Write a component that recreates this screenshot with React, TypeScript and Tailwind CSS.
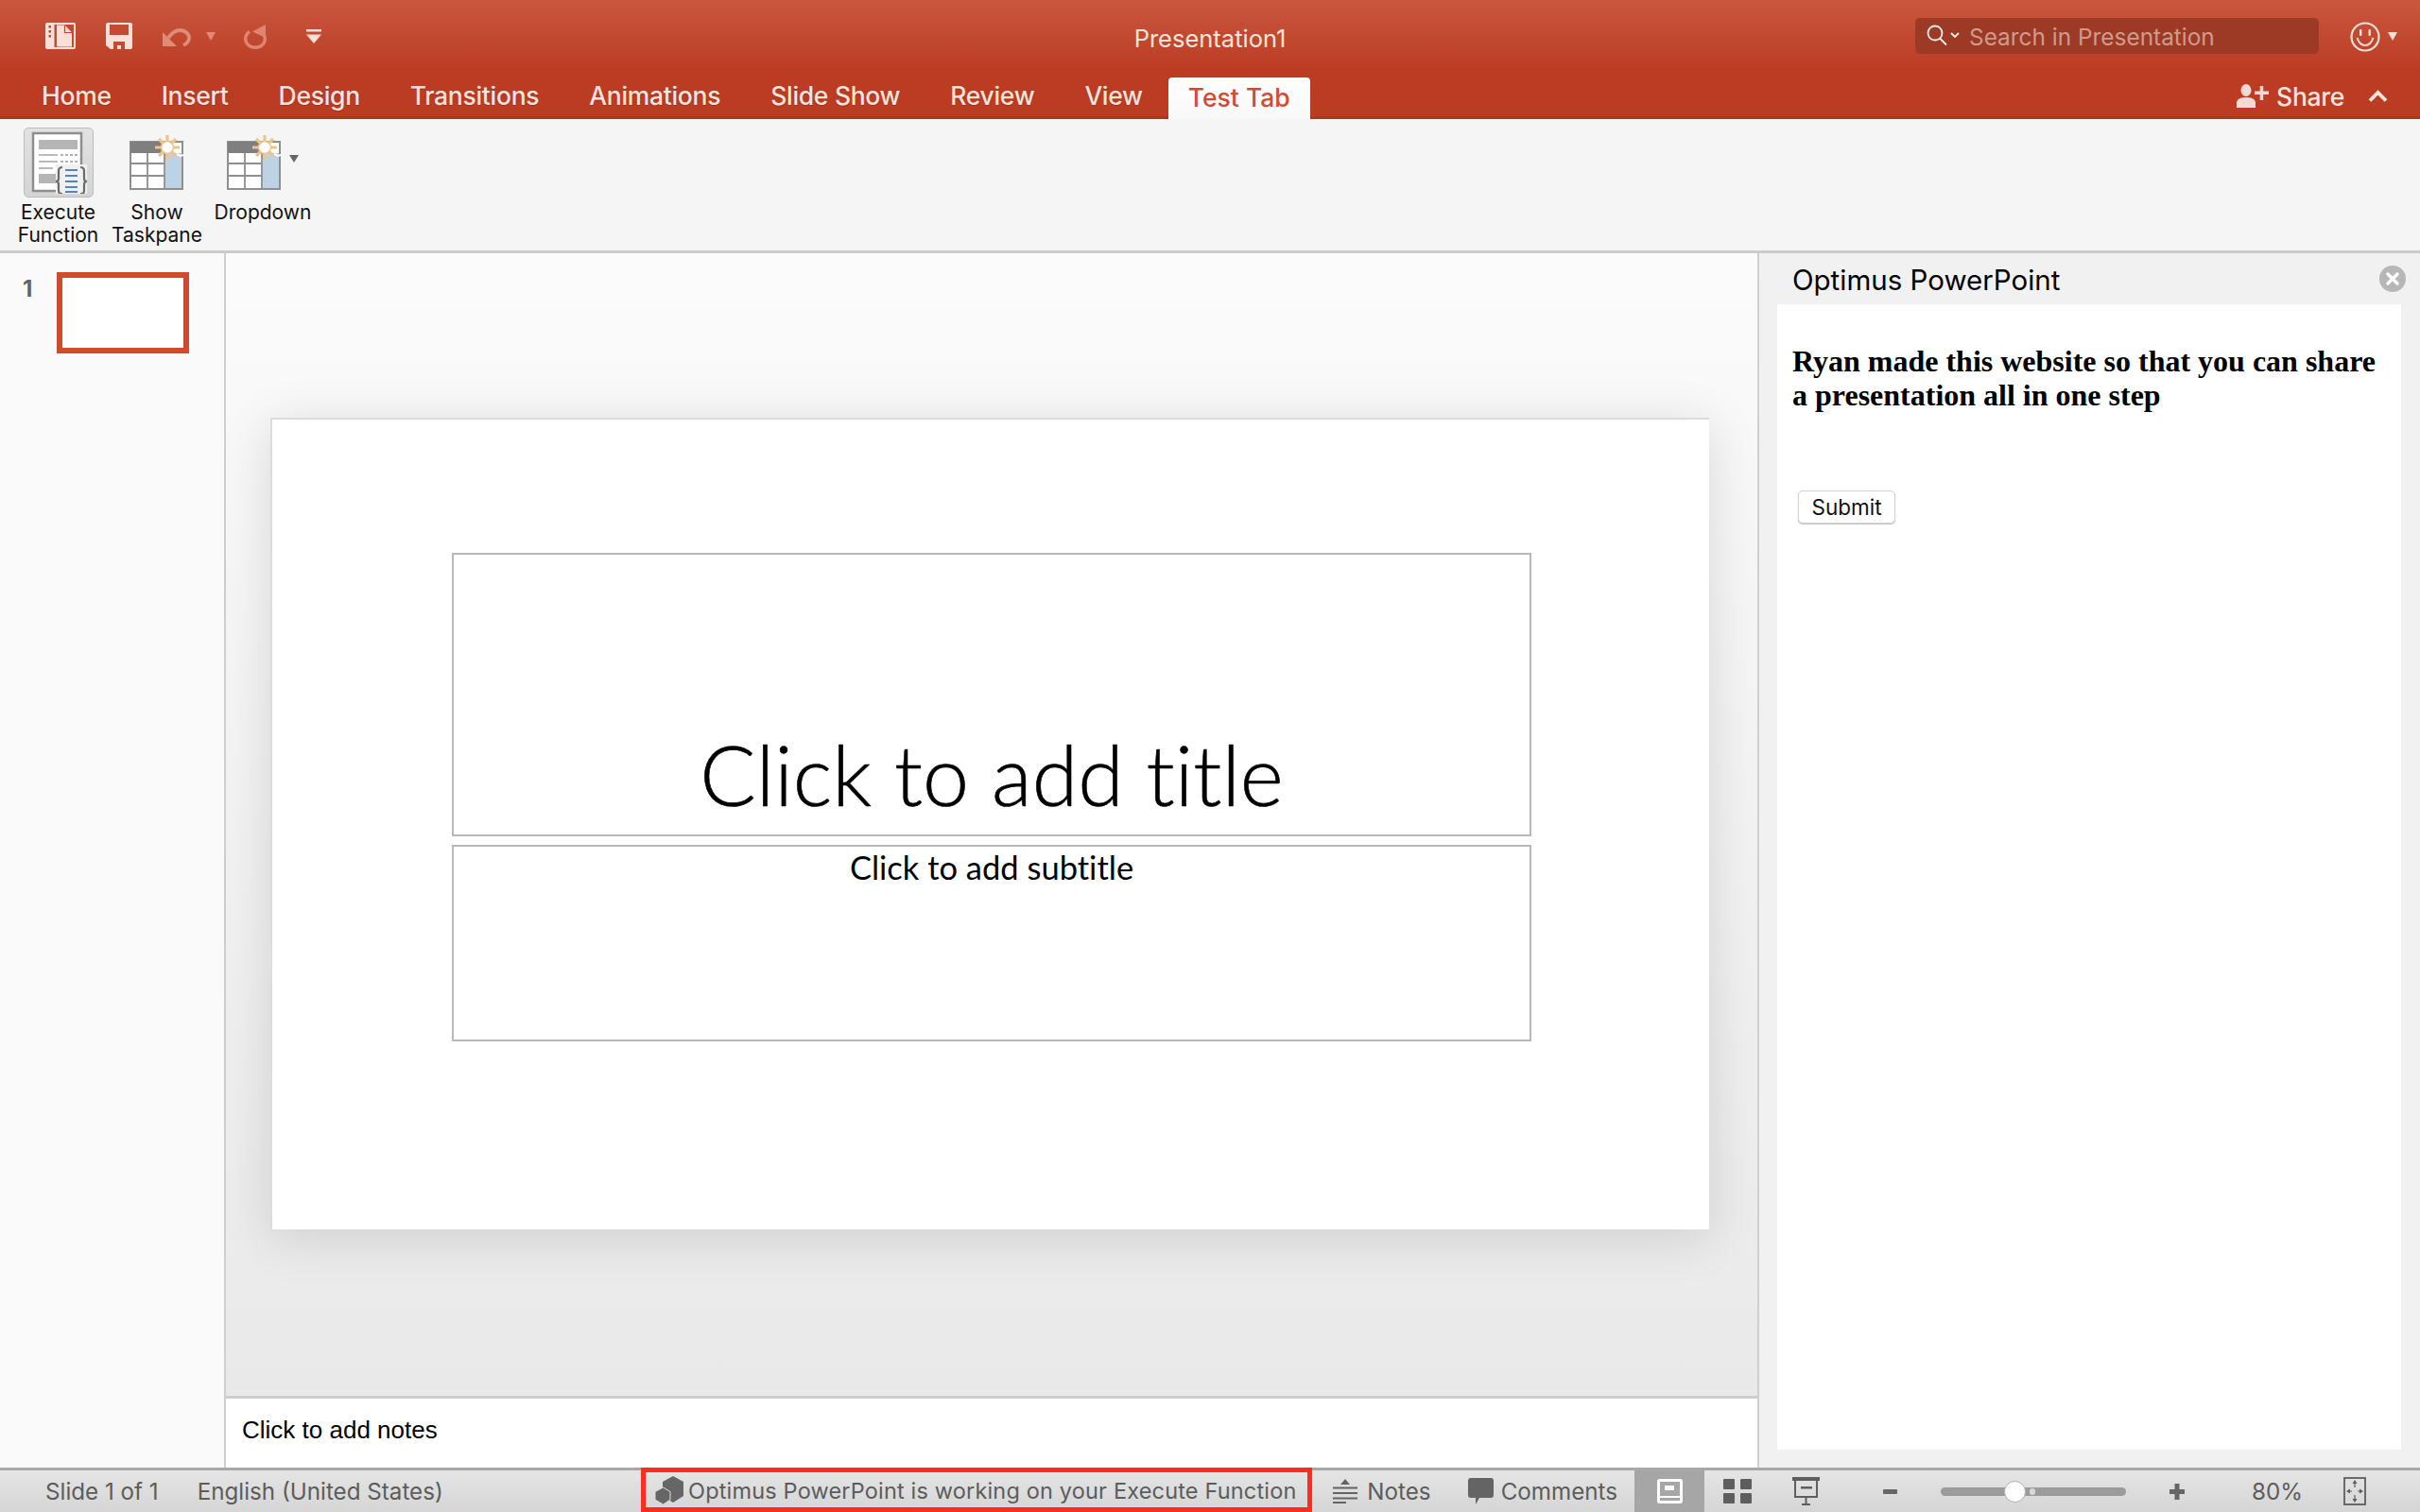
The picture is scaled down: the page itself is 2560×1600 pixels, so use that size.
import React from "react";

const ui = "font-['Inter','Liberation_Sans',sans-serif]";

function FilePanelIcon() {
  return (
    <svg width="32" height="28" viewBox="0 0 32 28">
      <rect x="0" y="0" width="32" height="28" rx="2" fill="#f8dfd8" />
      <rect x="9.500" y="2" width="20.500" height="24" fill="#c44a30" />
      <path d="M12 2.500h8.500l7.500 8V25.500H13a1 1 0 0 1-1-1z" fill="#f8dfd8" />
      <path d="M20.500 2.500v8h7.500" fill="none" stroke="#c44a30" strokeWidth="1.200" />
      <rect x="3.500" y="3" width="2.500" height="2.500" fill="#c44a30" />
      <rect x="3.500" y="8" width="2.500" height="2.500" fill="#c44a30" />
      <rect x="3.500" y="13" width="2.500" height="2.500" fill="#c44a30" />
    </svg>
  );
}

function SaveIcon() {
  return (
    <svg width="28" height="28" viewBox="0 0 28 28">
      <path d="M2 0h24a2 2 0 0 1 2 2v24a2 2 0 0 1-2 2H5l-5-4V2a2 2 0 0 1 2-2z" fill="#f8dfd8" />
      <rect x="4" y="2" width="20" height="11" fill="#c44a30" />
      <path d="M8 28v-8h12v8h-4v-4h-4v4z" fill="#c44a30" />
    </svg>
  );
}

function UndoIcon() {
  return (
    <svg width="30" height="19" viewBox="0 0 30 19">
      <path d="M0 4v15h15z" fill="#de8b77" />
      <path d="M6 10c3-4 7-8 12-8 5 0 10 3 10 8 0 3-2 6-6 8" fill="none" stroke="#de8b77" strokeWidth="3.800" />
    </svg>
  );
}

function RedoIcon() {
  return (
    <svg width="24" height="26" viewBox="0 0 24 26">
      <path d="M6 7.500C3 9.500 1.700 12 1.700 15c0 5.500 4.500 9.300 10.300 9.300S22.300 20.500 22.300 15c0-1.500-.3-3-1-4.200" fill="none" stroke="#dd8570" strokeWidth="3.400" />
      <path d="M23 0v14L9 7.500z" fill="#dd8570" />
    </svg>
  );
}

function CustomizeIcon() {
  return (
    <svg width="16" height="15" viewBox="0 0 16 15">
      <rect x="0" y="0" width="16" height="2.500" fill="#f8dfd8" />
      <path d="M0 5.500h16L8 15z" fill="#f8dfd8" />
    </svg>
  );
}

function SearchIcon() {
  return (
    <svg width="36" height="24" viewBox="0 0 36 24" fill="none" stroke="#fbeeea">
      <circle cx="9" cy="9" r="7.500" strokeWidth="1.800" />
      <path d="M14 14.500l7 7" strokeWidth="1.800" />
      <path d="M26 9l4 4 4-4" strokeWidth="1.800" />
    </svg>
  );
}

function SmileIcon() {
  return (
    <svg width="50" height="34" viewBox="0 0 50 34" fill="none">
      <ellipse cx="16" cy="17" rx="14.500" ry="14.500" stroke="#f8e0d9" strokeWidth="2.200" />
      <rect x="10" y="9" width="2.400" height="7" rx="1" fill="#f8e0d9" />
      <rect x="19.500" y="9" width="2.400" height="7" rx="1" fill="#f8e0d9" />
      <path d="M7.500 18c2 6 5 8 8.500 8s6.500-2 8.500-8" stroke="#f8e0d9" strokeWidth="2" />
      <path d="M40 12h10l-5 9z" fill="#f8e0d9" />
    </svg>
  );
}

function ShareIcon() {
  return (
    <svg width="34" height="25" viewBox="0 0 34 25" fill="#f5dad3">
      <ellipse cx="10" cy="6.500" rx="5.500" ry="6.500" />
      <path d="M0 25v-5c0-4 4-6 10-6s10 2 10 6v5z" />
      <rect x="19" y="7.500" width="15" height="3.500" />
      <rect x="24.700" y="2" width="3.500" height="15" />
    </svg>
  );
}

function ExecuteIcon() {
  return (
    <svg width="60" height="66" viewBox="0 0 60 66">
      <rect x="3" y="2" width="51" height="61" fill="#fff" stroke="#8e8e8e" strokeWidth="2.500" />
      <rect x="9" y="9" width="41" height="10" fill="#b5b5b5" />
      <rect x="9" y="24" width="20" height="2" fill="#bbb" />
      <rect x="9" y="31" width="20" height="2" fill="#bbb" />
      <rect x="9" y="38" width="15" height="2" fill="#bbb" />
      <path d="M32 25h18M32 32h18" stroke="#999" strokeWidth="1.500" strokeDasharray="3 2" />
      <rect x="9" y="45" width="20" height="10" fill="#b5b5b5" />
      <rect x="27" y="35" width="33" height="31" fill="#f0f0f0" />
      <path d="M34 38c-4 0-4 2-4 6v6c0 2-1 3-3 3 2 0 3 1 3 3v6c0 3 0 4 4 4" fill="none" stroke="#6a6a6a" strokeWidth="2.200" />
      <path d="M53 38c4 0 4 2 4 6v6c0 2 1 3 3 3-2 0-3 1-3 3v6c0 3 0 4-4 4" fill="none" stroke="#6a6a6a" strokeWidth="2.200" />
      <path d="M37 41h13M37 47h13M37 53h13M37 59h13M37 64h13" stroke="#4d86c2" strokeWidth="2.200" />
    </svg>
  );
}

function TaskpaneIcon() {
  return (
    <svg width="58" height="58" viewBox="0 0 58 58">
      <rect x="1" y="7" width="55" height="50" fill="#fff" stroke="#8f8f8f" strokeWidth="2" />
      <rect x="1" y="7" width="38" height="12" fill="#7f7f7f" />
      <rect x="37" y="19" width="19" height="38" fill="#bed2e5" />
      <path d="M37 7v50M19 19v38M1 30h36M1 43h36" stroke="#8f8f8f" strokeWidth="1.800" />
      <path d="M37 57h19V7" fill="none" stroke="#8f8f8f" strokeWidth="2" />
      <g stroke="#efc48a" strokeWidth="3.200">
        <path d="M40 0v26M27 13h26M31 4l18 18M49 4L31 22" />
      </g>
      <circle cx="40" cy="13" r="6.500" fill="#fff" stroke="#efc48a" strokeWidth="1.500" />
      <path d="M50 20l4 2 3-1" stroke="#fff" strokeWidth="2" fill="none" />
    </svg>
  );
}

function OptimusIcon() {
  return (
    <svg width="31" height="30" viewBox="0 0 31 30">
      <path d="M20 0l11 6v15l-11 7-11-7V6z" fill="#666" />
      <path d="M9.500 12l7.500 4.500v8.500l-7.500 5L1 25v-8.500z" fill="#666" stroke="#dcdcdc" strokeWidth="1" />
    </svg>
  );
}

function NotesIcon() {
  return (
    <svg width="26" height="26" viewBox="0 0 26 26" fill="#646464">
      <path d="M13 0l5 6H8z" />
      <rect x="0" y="8.500" width="26" height="2" />
      <rect x="0" y="14" width="26" height="2" />
      <rect x="0" y="19.500" width="26" height="2" />
      <rect x="0" y="24" width="14" height="2" />
    </svg>
  );
}

function CommentIcon() {
  return (
    <svg width="27" height="28" viewBox="0 0 27 28" fill="#646464">
      <path d="M3 0h21a3 3 0 0 1 3 3v15a3 3 0 0 1-3 3H12l-4 7v-7H3a3 3 0 0 1-3-3V3a3 3 0 0 1 3-3z" />
    </svg>
  );
}

function NormalViewIcon() {
  return (
    <svg width="27" height="26" viewBox="0 0 27 26" fill="none">
      <rect x="1.500" y="1.500" width="24" height="23" rx="1" stroke="#fff" strokeWidth="3" />
      <rect x="8" y="7" width="10" height="5" fill="#fff" />
      <rect x="2" y="18" width="23" height="2" fill="#fff" />
    </svg>
  );
}

function GridIcon() {
  return (
    <svg width="30" height="26" viewBox="0 0 30 26" fill="#5e5e5e">
      <rect x="0" y="0" width="12" height="11" rx="1" />
      <rect x="18" y="0" width="12" height="11" rx="1" />
      <rect x="0" y="15" width="12" height="11" rx="1" />
      <rect x="18" y="15" width="12" height="11" rx="1" />
    </svg>
  );
}

function PresenterIcon() {
  return (
    <svg width="29" height="30" viewBox="0 0 29 30" fill="none">
      <rect x="0" y="0" width="29" height="4" fill="#5e5e5e" />
      <path d="M3 3v18h23V3" stroke="#5e5e5e" strokeWidth="2" />
      <rect x="9" y="10" width="12" height="2.500" fill="#5e5e5e" />
      <path d="M14.500 21v8M10 29h9" stroke="#5e5e5e" strokeWidth="2" />
    </svg>
  );
}

function FitIcon() {
  return (
    <svg width="24" height="30" viewBox="0 0 24 30" fill="none" stroke="#5e5e5e">
      <rect x="1" y="1" width="22" height="28" strokeWidth="1.800" />
      <path d="M12 4v7M12 19v7M4 15h5M15 15h5" strokeWidth="1.200" />
      <path d="M12 3l-2.500 4h5zM12 27l-2.500-4h5zM3 15l4-2.500v5zM21 15l-4-2.500v5z" fill="#5e5e5e" stroke="none" />
    </svg>
  );
}

const tabs = ["Home", "Insert", "Design", "Transitions", "Animations", "Slide Show", "Review", "View"];

function TitleBar() {
  return (
    <header className={`${ui} h-[126px] flex flex-col bg-gradient-to-b from-[#c9573e] to-[#bb3c23] to-[60%] border-b-[3px] border-[#ab3820] text-[#f8e3dd]`}>
      <div className="h-[82px] grid grid-cols-[1fr_auto_1fr] items-start">
        <div className="flex items-center pl-[48px] mt-[24px] h-[28px]">
          <FilePanelIcon />
          <div className="ml-[32px]"><SaveIcon /></div>
          <div className="ml-[32px] mt-[3px]"><UndoIcon /></div>
          <div className="ml-[16px] w-0 h-0 border-x-[5px] border-x-transparent border-t-[9px] border-t-[#de8b77]" />
          <div className="ml-[30px] mt-[2px]"><RedoIcon /></div>
          <div className="ml-[42px]"><CustomizeIcon /></div>
        </div>
        <div className="pt-[24px] text-[25.500px] leading-[34px]">Presentation1</div>
        <div className="flex items-start justify-end pt-[19px] pr-[24px]">
          <div className="w-[427px] h-[38px] rounded-[5px] bg-[#9c3a26] flex items-center pl-[12px] text-[24.400px] text-[#d09a8c]">
            <SearchIcon />
            <span className="ml-[9px] mt-[2px]">Search in Presentation</span>
          </div>
          <div className="ml-[33px] mt-[3px]"><SmileIcon /></div>
        </div>
      </div>
      <div className="flex-1 flex items-end pl-[44px] gap-[53px] -mt-px">
        {tabs.map((t) => (
          <span key={t} className="h-[43px] text-[26.500px] leading-[43px] font-medium tracking-[-0.3px] [text-shadow:0_1px_1px_rgba(120,30,10,0.4)]">{t}</span>
        ))}
        <div className="-ml-[26px] -mb-[3px] w-[150px] h-[44px] bg-gradient-to-b from-white to-[#f8f8f8] rounded-t-[4px] text-[#d24a2f] text-[26.500px] leading-[42px] font-medium text-center">Test Tab</div>
        <div className="ml-auto flex items-center h-[43px] pr-[34px]">
          <ShareIcon />
          <span className="ml-[8px] text-[26.500px] leading-[42px] font-medium tracking-[-0.3px]">Share</span>
          <svg className="ml-[25px]" width="21" height="13" viewBox="0 0 21 13" fill="none" stroke="#f8e3dd" strokeWidth="3.800"><path d="M2 11.500l8.500-8.500 8.500 8.500" /></svg>
        </div>
      </div>
    </header>
  );
}

function RibbonButton({ icon, lines, w, active }: { icon: React.ReactNode; lines: string[]; w: string; active?: boolean }) {
  return (
    <div className={`${w} flex flex-col items-center`}>
      <div className={`h-[74px] w-[74px] mt-[9px] flex items-center justify-center rounded-[5px] ${active ? "bg-gradient-to-b from-[#e2e2e2] to-[#d4d4d4] border border-[#bcbcbc]" : ""}`}>{icon}</div>
      <div className="mt-[4px] text-[21px] leading-[24px] text-[#111] text-center whitespace-nowrap">
        {lines.map((l) => <div key={l}>{l}</div>)}
      </div>
    </div>
  );
}

function Ribbon() {
  return (
    <div className={`${ui} h-[142px] bg-[#f5f5f5] border-b-[3px] border-[#cbcbcb] flex pl-[19px] gap-[15px]`}>
      <RibbonButton icon={<ExecuteIcon />} lines={["Execute", "Function"]} w="w-[85px]" active />
      <RibbonButton icon={<TaskpaneIcon />} lines={["Show", "Taskpane"]} w="w-[94px]" />
      <div className="w-[102px] flex flex-col items-center -ml-[1px]">
        <div className="h-[74px] w-full mt-[9px] flex items-center pl-[13px]">
          <TaskpaneIcon />
          <div className="ml-[8px] -mt-[8px] w-0 h-0 border-x-[5px] border-x-transparent border-t-[8px] border-t-[#666]" />
        </div>
        <div className="mt-[4px] text-[21px] leading-[24px] text-[#111]">Dropdown</div>
      </div>
    </div>
  );
}

function Thumbnails() {
  return (
    <aside className="w-[239px] bg-[#fafafa] border-r-2 border-[#cfcfcf] flex items-start pl-[24px] pt-[20px]">
      <span className={`${ui} text-[24px] leading-[34px] font-bold text-[#666] w-[36px] mt-[1px]`}>1</span>
      <div className="w-[140px] h-[86px] bg-white border-[6px] border-[#cf4a2f]" />
    </aside>
  );
}

function Slide() {
  return (
    <div className="w-[1522px] h-[859px] bg-white border-2 border-[#dcdcdc] border-r-0 border-b-0 shadow-[0_8px_50px_rgba(0,0,0,0.13)] pl-[190px] pt-[141px] font-['Lato','Open_Sans',sans-serif] text-black [font-variant-ligatures:none]">
      <div className="w-[1142px] h-[300px] border-2 border-[#b8b8b8] flex items-end justify-center">
        <span className="text-[88px] leading-[102px] font-light mb-[13px] [-webkit-text-stroke:0.6px_black]">Click to add title</span>
      </div>
      <div className="mt-[9px] w-[1142px] h-[208px] border-2 border-[#b8b8b8] flex justify-center">
        <span className="text-[34.500px] leading-[46px] -mt-[1px]">Click to add subtitle</span>
      </div>
    </div>
  );
}

function MainArea() {
  return (
    <main className="w-[1620px] flex flex-col">
      <div className="flex-1 bg-gradient-to-b from-[#fbfbfb] to-[#e9e9e9] pt-[174px] pl-[47px]">
        <Slide />
      </div>
      <div className="h-[76px] bg-white border-t-[3px] border-[#cdcdcd] pl-[17px] font-['Liberation_Sans',sans-serif] text-[26px] leading-[66px] text-black">Click to add notes</div>
    </main>
  );
}

function TaskPane() {
  return (
    <aside className="flex-1 bg-[#f1f1f1] border-l-2 border-[#cfcfcf] flex flex-col pb-[19px]">
      <div className={`${ui} h-[54px] flex items-center justify-between pl-[35px] pr-[15px]`}>
        <span className="text-[29.500px] leading-[40px] text-black mt-[2px]">Optimus PowerPoint</span>
        <svg width="28" height="28" viewBox="0 0 28 28">
          <circle cx="14" cy="14" r="14" fill="#b7b7b7" />
          <path d="M9 9l10 10M19 9L9 19" stroke="#fff" strokeWidth="3.500" strokeLinecap="round" />
        </svg>
      </div>
      <div className="flex-1 bg-white ml-[19px] mr-[20px] pl-[16px] pt-[42px]">
        <h3 className="font-['Liberation_Serif',serif] font-bold text-[32px] leading-[36px] text-black w-[630px]">Ryan made this website so that you can share a presentation all in one step</h3>
        <button className={`${ui} block mt-[83px] ml-[6px] w-[103px] h-[35px] rounded-[5px] bg-white border border-[#d2d2d2] shadow-[0_1px_1px_rgba(0,0,0,0.25)] text-[22.500px] leading-[32px] text-[#111]`}>Submit</button>
      </div>
    </aside>
  );
}

function StatusBar() {
  return (
    <footer className={`${ui} relative h-[47px] border-t-[3px] border-[#a8a8a8] bg-gradient-to-b from-[#e5e5e5] to-[#d5d5d5] flex items-center text-[24.200px] text-[#5c5c5c] pr-[57px]`}>
      <span className="ml-[48px] mt-[2px]">Slide 1 of 1</span>
      <span className="ml-[41px] mt-[2px]">English (United States)</span>
      <div className="absolute left-[678px] -top-[3px] w-[710px] h-[47px] border-[5px] border-[#ff2d20] flex items-center pl-[9px] whitespace-nowrap text-[23.500px]">
        <OptimusIcon />
        <span className="ml-[5px] mt-[2px] tracking-[0.17px]">Optimus PowerPoint is working on your Execute Function</span>
      </div>
      <div className="ml-auto flex items-center">
        <NotesIcon />
        <span className="ml-[10px] mt-[2px]">Notes</span>
      </div>
      <div className="ml-[39px] flex items-center">
        <CommentIcon />
        <span className="ml-[8px] mt-[2px]">Comments</span>
      </div>
      <div className="ml-[18px] w-[74px] h-full bg-[#a6a6a6] flex items-center justify-center"><NormalViewIcon /></div>
      <div className="ml-[20px]"><GridIcon /></div>
      <div className="ml-[43px]"><PresenterIcon /></div>
      <div className="ml-[67px] w-[15px] h-[5px] bg-[#666] rounded-[1px]" />
      <div className="relative ml-[46px] w-[196px] h-[9px] bg-[#9b9b9b] rounded-full">
        <div className="absolute left-[67px] -top-[7px] w-[23px] h-[23px] rounded-full bg-white border border-[#b0b0b0]" />
        <div className="absolute left-[94px] top-[1px] w-[6px] h-[7px] rounded-full bg-[#d8d8d8]" />
      </div>
      <svg className="ml-[46px]" width="16" height="17" viewBox="0 0 16 17" fill="#666"><rect x="0" y="6" width="16" height="5" /><rect x="5.500" y="0" width="5" height="17" /></svg>
      <span className="ml-[71px] mt-[2px]">80%</span>
      <div className="ml-[43px]"><FitIcon /></div>
    </footer>
  );
}

export default function App() {
  return (
    <div className="w-[2560px] h-[1600px] flex flex-col overflow-hidden bg-white">
      <TitleBar />
      <Ribbon />
      <div className="flex-1 flex min-h-0">
        <Thumbnails />
        <MainArea />
        <TaskPane />
      </div>
      <StatusBar />
    </div>
  );
}
